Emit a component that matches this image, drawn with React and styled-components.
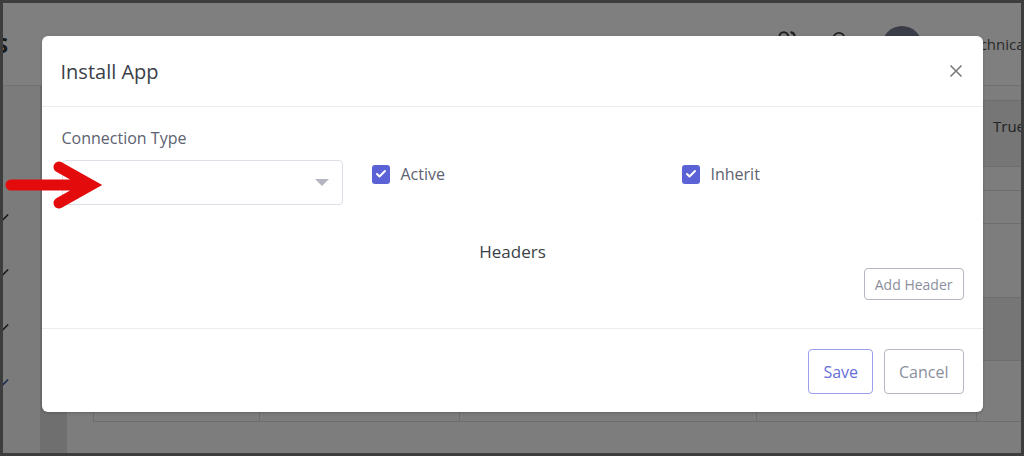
import React from 'react';
import styled, { createGlobalStyle } from 'styled-components';
import { Users, Bell, Check } from 'lucide-react';

const GlobalStyle = createGlobalStyle`
  body {
    margin: 0;
    font-family: 'Open Sans', 'Noto Sans', sans-serif;
  }
`;

const Frame = styled.div`
  position: relative;
  width: 1024px;
  height: 456px;
  box-sizing: border-box;
  border: 3px solid #3d3d3d;
  overflow: hidden;
  background: #fff;
`;

const Page = styled.div`
  display: flex;
  flex-direction: column;
  height: 100%;
`;

const TopBar = styled.header`
  height: 82px;
  flex-shrink: 0;
  display: flex;
  align-items: center;
  border-bottom: 1px solid #e2e2e2;
  background: #fff;
`;

const Logo = styled.span`
  margin-left: -7px;
  font-size: 22px;
  font-weight: 700;
  color: #333;
`;

const TopIcons = styled.div`
  margin-left: auto;
  display: flex;
  align-items: center;
  gap: 28px;
  margin-top: -4px;
  color: #444;
`;

const Avatar = styled.div`
  width: 40px;
  height: 40px;
  border-radius: 50%;
  background: #757a90;
  margin-left: 32px;
  margin-top: 4px;
`;

const UserName = styled.span`
  width: 125px;
  margin-left: 41px;
  margin-right: -67px;
  font-size: 15px;
  color: #555;
  white-space: nowrap;
`;

const Main = styled.div`
  flex: 1;
  display: flex;
`;

const SideBar = styled.nav`
  width: 37px;
  display: flex;
  flex-direction: column;
  gap: 35px;
  padding-top: 124px;
  background: #f7f7f7;
  color: #333;

  svg {
    margin-left: -12px;
  }
`;

const Strip = styled.div`
  width: 27px;
  background: #dedede;
`;

const Content = styled.div`
  flex: 1;
  padding: 14px 0 0 26px;
  background: #fbfbfb;
  overflow: hidden;
`;

const Table = styled.div`
  display: grid;
  grid-template-columns: 166px 200px 297px 220px 140px;
  width: 1023px;
  border-left: 1px solid #ddd;
  border-bottom: 1px solid #ddd;
`;

const Cell = styled.div`
  height: ${(p) => p.h}px;
  box-sizing: border-box;
  border-top: 1px solid #ddd;
  border-right: 1px solid #ddd;
  background: ${(p) => (p.shade ? '#ececec' : '#fafafa')};
  padding: 15px 16px 0;
  font-size: 15px;
  line-height: 20px;
  color: #444;
  overflow: hidden;
`;

const Overlay = styled.div`
  position: absolute;
  inset: 0;
  background: rgba(0, 0, 0, 0.5);
  display: flex;
  justify-content: center;
  align-items: flex-start;
  padding-top: 33px;
`;

const Modal = styled.div`
  width: 941px;
  background: #fff;
  border-radius: 6px;
  box-shadow: 0 1px 3px rgba(0, 0, 0, 0.2);
`;

const ModalHeader = styled.div`
  height: 70px;
  display: flex;
  align-items: center;
  justify-content: space-between;
  padding: 0 20px 0 19px;
  border-bottom: 1px solid #ececf0;
`;

const Title = styled.h5`
  margin: 0;
  font-size: 20px;
  font-weight: 400;
  color: #3b3f48;
`;

const Close = styled.button`
  border: 0;
  background: none;
  padding: 0;
  width: 14px;
  height: 14px;
  display: flex;
  cursor: pointer;
`;

const ModalBody = styled.div`
  padding: 20px 19px 28px 20px;
`;

const FieldRow = styled.div`
  display: grid;
  grid-template-columns: repeat(3, 280px);
  column-gap: 30px;
`;

const Label = styled.label`
  display: block;
  font-size: 16px;
  line-height: 22px;
  color: #5c6270;
  margin-bottom: 11px;
`;

const SelectBox = styled.div`
  height: 45px;
  width: 281px;
  box-sizing: border-box;
  border: 1px solid #dcdfe6;
  border-radius: 4px;
  display: flex;
  align-items: center;
  justify-content: flex-end;
  padding-right: 13px;
`;

const Caret = styled.span`
  width: 0;
  height: 0;
  border-left: 7px solid transparent;
  border-right: 7px solid transparent;
  border-top: 7px solid #b3b6c2;
`;

const CheckWrap = styled.label`
  display: flex;
  align-items: center;
  gap: 11px;
  margin-top: 37px;
  font-size: 16px;
  color: #5c6270;
  height: 20px;
`;

const Box = styled.span`
  width: 18px;
  height: 19px;
  border-radius: 3px;
  background: #5a62d6;
  display: flex;
  align-items: center;
  justify-content: center;
  color: #fff;
`;

const SectionTitle = styled.div`
  text-align: center;
  font-size: 17px;
  font-weight: 500;
  color: #3b3f48;
  margin-top: 36px;
  line-height: 22px;
`;

const ButtonRow = styled.div`
  display: flex;
  justify-content: flex-end;
  gap: 11px;
`;

const Button = styled.button`
  font-family: inherit;
  background: #fff;
  border-radius: 4px;
  border: 1px solid ${(p) => (p.primary ? '#9aa0ec' : '#b4b8c3')};
  color: ${(p) => (p.primary ? '#666ed9' : '#8a8f9e')};
  font-size: ${(p) => (p.small ? 14 : 16)}px;
  height: ${(p) => (p.small ? 32 : 45)}px;
  padding: 0 ${(p) => (p.small ? 10 : 14)}px;
  cursor: pointer;
`;

const HeaderActions = styled(ButtonRow)`
  margin-top: 5px;
`;

const ModalFooter = styled.div`
  border-top: 1px solid #ececf0;
  padding: 20px 19px 18px;
`;

const Pointer = styled.svg`
  position: absolute;
  left: 0;
  top: 158px;
`;

const rows = [
  { h: 66, shade: true, last: 'True' },
  { h: 24 },
  { h: 33 },
  { h: 74 },
  { h: 63, shade: true },
  { h: 61 },
];

const Checkbox = ({ label }) => (
  <CheckWrap>
    <Box>
      <Check size={12} strokeWidth={4} />
    </Box>
    {label}
  </CheckWrap>
);

const App = () => {
  return (
    <>
      <GlobalStyle />
      <Frame>
        <Page>
          <TopBar>
            <Logo>S</Logo>
            <TopIcons>
              <Users size={26} />
              <Bell size={22} />
            </TopIcons>
            <Avatar />
            <UserName>Technical Support</UserName>
          </TopBar>
          <Main>
            <SideBar>
              <Check size={20} />
              <Check size={20} />
              <Check size={20} />
              <Check size={20} color='#3554a8' />
            </SideBar>
            <Strip />
            <Content>
              <Table>
                {rows.map((r, i) => (
                  <React.Fragment key={i}>
                    <Cell h={r.h} shade={r.shade} />
                    <Cell h={r.h} shade={r.shade} />
                    <Cell h={r.h} shade={r.shade} />
                    <Cell h={r.h} shade={r.shade} />
                    <Cell h={r.h} shade={r.shade}>
                      {r.last}
                    </Cell>
                  </React.Fragment>
                ))}
              </Table>
            </Content>
          </Main>
        </Page>

        <Overlay>
          <Modal>
            <ModalHeader>
              <Title>Install App</Title>
              <Close aria-label='close'>
                <svg width='14' height='14' viewBox='0 0 14 14'>
                  <path
                    d='M1.5 1.5 L12.5 12.5 M12.5 1.5 L1.5 12.5'
                    stroke='#7a7a7a'
                    strokeWidth='1.6'
                  />
                </svg>
              </Close>
            </ModalHeader>
            <ModalBody>
              <FieldRow>
                <div>
                  <Label>Connection Type</Label>
                  <SelectBox>
                    <Caret />
                  </SelectBox>
                </div>
                <Checkbox label='Active' />
                <Checkbox label='Inherit' />
              </FieldRow>
              <SectionTitle>Headers</SectionTitle>
              <HeaderActions>
                <Button small>Add Header</Button>
              </HeaderActions>
            </ModalBody>
            <ModalFooter>
              <ButtonRow>
                <Button primary>Save</Button>
                <Button>Cancel</Button>
              </ButtonRow>
            </ModalFooter>
          </Modal>
        </Overlay>

        <Pointer width='100' height='50' viewBox='0 0 100 50'>
          <path
            d='M8 24 H86 M56 6 L88 24 L56 42'
            fill='none'
            stroke='#e30b0b'
            strokeWidth='11'
            strokeLinecap='round'
            strokeLinejoin='miter'
          />
        </Pointer>
      </Frame>
    </>
  );
};

export default App;
